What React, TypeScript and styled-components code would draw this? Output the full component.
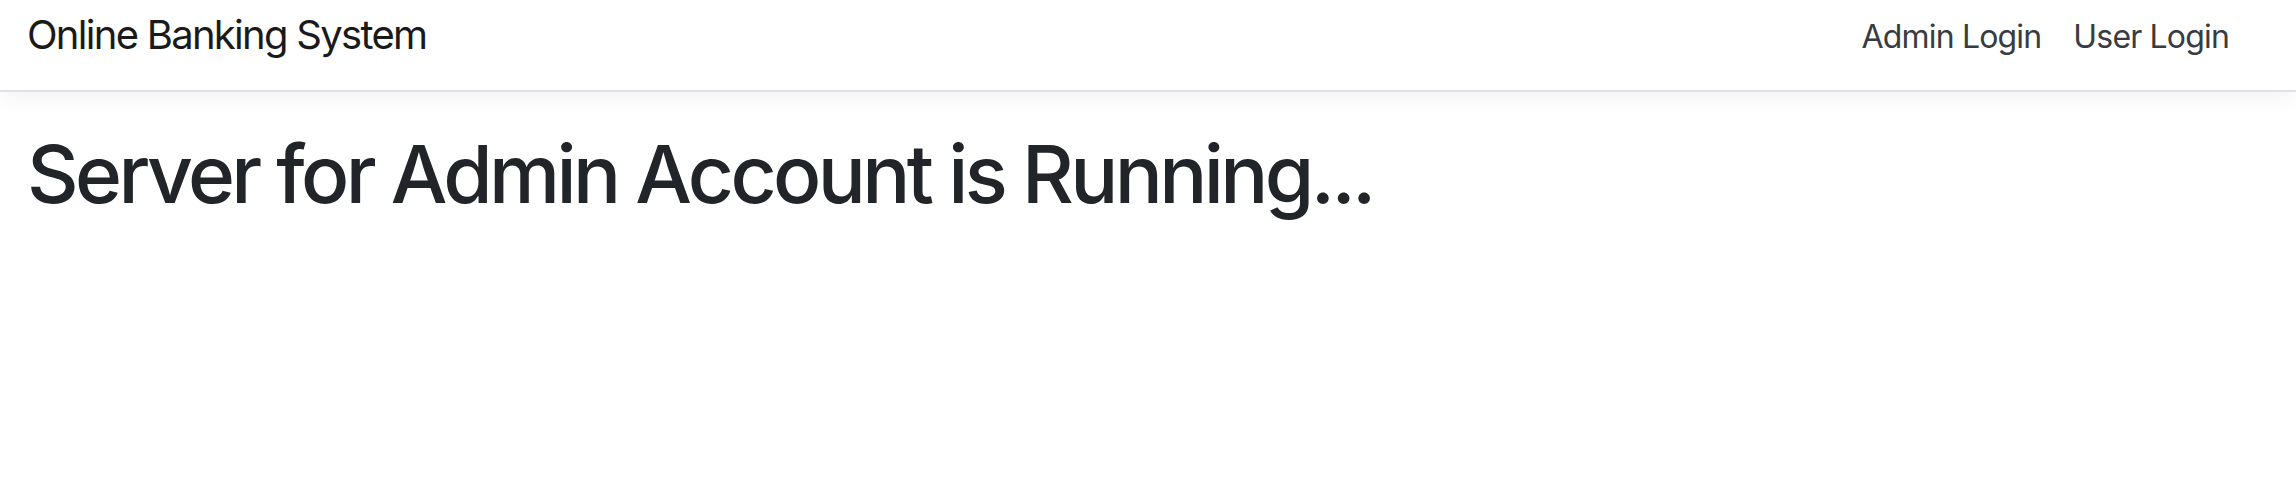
import React from "react";
import styled, { createGlobalStyle } from "styled-components";

const GlobalStyle = createGlobalStyle`
  html, body {
    margin: 0;
    padding: 0;
    background: #ffffff;
    font-family: Inter, "Noto Sans", "Liberation Sans", sans-serif;
    color: #212529;
  }
`;

const NavBar = styled.nav`
  display: flex;
  align-items: flex-start;
  justify-content: space-between;
  height: 92px;
  box-sizing: border-box;
  padding: 15px 51px 0 27px;
  background: #ffffff;
  border-bottom: 2px solid #dee2e6;
  box-shadow: 0 6px 20px rgba(0, 0, 0, 0.05);
  position: relative;
  z-index: 1;
`;

const Brand = styled.a`
  font-size: 40px;
  letter-spacing: -0.043em;
  color: #1a1a1a;
  text-decoration: none;
  line-height: 1;
`;

const NavLinks = styled.div`
  display: flex;
  align-items: center;
  padding-top: 6px;
`;

const NavLink = styled.a`
  font-size: 32px;
  letter-spacing: -0.026em;
  color: #373c42;
  text-decoration: none;
  padding: 0 16px;
  line-height: 1;
`;

const Main = styled.main`
  padding: 34px 27px 0;
`;

const Heading = styled.h1`
  margin: 0;
  font-size: 80px;
  font-weight: 500;
  letter-spacing: -0.045em;
  line-height: 1.2;
  color: #212529;
`;

export default function App() {
  return (
    <>
      <GlobalStyle />
      <NavBar>
        <Brand href="#">Online Banking System</Brand>
        <NavLinks>
          <NavLink href="#">Admin Login</NavLink>
          <NavLink href="#">User Login</NavLink>
        </NavLinks>
      </NavBar>
      <Main>
        <Heading>Server for Admin Account is Running...</Heading>
      </Main>
    </>
  );
}
